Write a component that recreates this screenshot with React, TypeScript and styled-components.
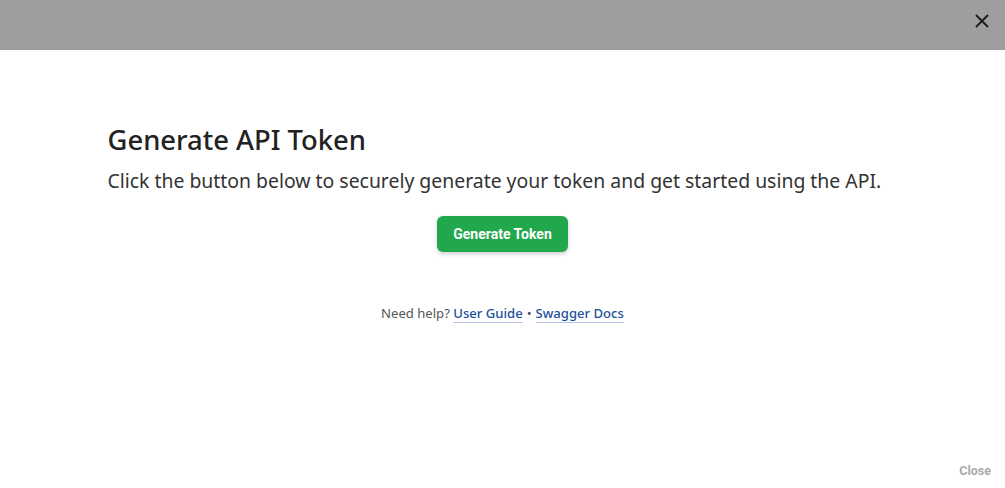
import { createGlobalStyle } from 'styled-components'
import styled from 'styled-components'

const GlobalStyle = createGlobalStyle`
  html, body {
    margin: 0;
    padding: 0;
    background: #ffffff;
  }
  body {
    font-family: 'Noto Sans', 'Open Sans', sans-serif;
    color: #222;
  }
`

const CloseIcon = () => (
  <svg width="14" height="14" viewBox="0 0 14 14" fill="none">
    <path d="M1.5 1.5L12.5 12.5M12.5 1.5L1.5 12.5" stroke="#1a1a1a" strokeWidth="1.8" strokeLinecap="round" />
  </svg>
)

const App = () => {
  return (
    <>
      <GlobalStyle />
      <Page>
        <Backdrop>
          <CloseButton aria-label="Close">
            <CloseIcon />
          </CloseButton>
        </Backdrop>
        <Panel>
          <Content>
            <Title>Generate API Token</Title>
            <Lead>
              Click the button below to securely generate your token and get started using the API.
            </Lead>
            <Actions>
              <GenerateButton>Generate Token</GenerateButton>
            </Actions>
            <Help>
              Need help? <HelpLink href="#">User Guide</HelpLink>
              <Dot>•</Dot>
              <HelpLink href="#">Swagger Docs</HelpLink>
            </Help>
          </Content>
          <Footer>
            <FooterClose>Close</FooterClose>
          </Footer>
        </Panel>
      </Page>
    </>
  )
}
export default App

const Page = styled.div`
  display: flex;
  flex-direction: column;
  width: 1005px;
  height: 488px;
  overflow: hidden;
`

const Backdrop = styled.div`
  height: 50px;
  flex-shrink: 0;
  background: #9e9e9e;
  display: flex;
  justify-content: flex-end;
  align-items: flex-start;
`

const CloseButton = styled.button`
  border: none;
  background: transparent;
  padding: 0;
  width: 20px;
  height: 20px;
  margin: 11px 13px 0 0;
  display: flex;
  align-items: center;
  justify-content: center;
  cursor: pointer;
`

const Panel = styled.div`
  flex: 1;
  background: #fff;
  display: flex;
  flex-direction: column;
`

const Content = styled.div`
  flex: 1;
  width: 790px;
  margin: 0 auto;
  padding-top: 72px;
  box-sizing: border-box;
`

const Title = styled.h1`
  margin: 0;
  font-size: 27.4px;
  font-weight: 500;
  line-height: 36px;
  color: #222;
`

const Lead = styled.p`
  margin: 9px 0 0;
  font-size: 19.4px;
  line-height: 28px;
  color: #333;
`

const Actions = styled.div`
  display: flex;
  justify-content: center;
  margin-top: 21px;
`

const GenerateButton = styled.button`
  height: 36px;
  padding: 0 16px;
  border: none;
  border-radius: 6px;
  background: #22a84c;
  color: #fff;
  font-family: Roboto, 'Liberation Sans', sans-serif;
  font-weight: 700;
  font-size: 14px;
  box-shadow: 0 2px 4px rgba(0, 0, 0, 0.2);
  cursor: pointer;
`

const Help = styled.div`
  margin-top: 52px;
  text-align: center;
  font-size: 13.1px;
  line-height: 18px;
  color: #555;
`

const HelpLink = styled.a`
  color: #1d4f9c;
  font-weight: 500;
  text-decoration: none;
  border-bottom: 1px solid #b4c5e4;
`

const Dot = styled.span`
  margin: 0 4px;
  color: #555;
`

const Footer = styled.div`
  display: flex;
  justify-content: flex-end;
  padding: 0 14px 10px 0;
`

const FooterClose = styled.button`
  border: none;
  background: transparent;
  padding: 0;
  font-family: Roboto, 'Liberation Sans', sans-serif;
  font-weight: 700;
  font-size: 12.5px;
  color: #aaa;
  cursor: pointer;
`
